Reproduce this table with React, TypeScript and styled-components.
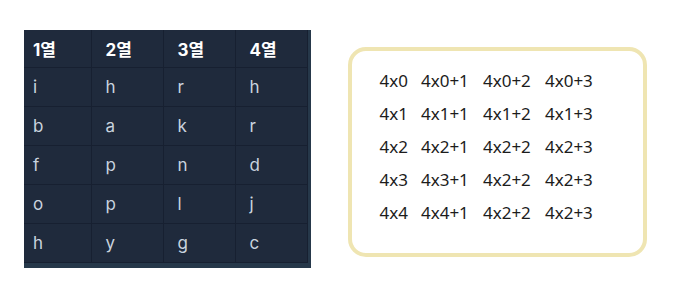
import React from "react"
import styled, { createGlobalStyle } from "styled-components"

const headers = ["1열", "2열", "3열", "4열"]
const rows = [
  ["i", "h", "r", "h"],
  ["b", "a", "k", "r"],
  ["f", "p", "n", "d"],
  ["o", "p", "l", "j"],
  ["h", "y", "g", "c"],
]

const formulas = [
  ["4x0", "4x0+1", "4x0+2", "4x0+3"],
  ["4x1", "4x1+1", "4x1+2", "4x1+3"],
  ["4x2", "4x2+1", "4x2+2", "4x2+3"],
  ["4x3", "4x3+1", "4x2+2", "4x2+3"],
  ["4x4", "4x4+1", "4x2+2", "4x2+3"],
]

const colWidths = [67, 72, 72, 72]

const App: React.FC = () => {
  return (
    <>
      <GlobalStyle />
      <Page>
        <TableWrap>
          <Table>
            <colgroup>
              {colWidths.map((w, i) => (
                <col key={i} style={{ width: w }} />
              ))}
            </colgroup>
            <thead>
              <tr>
                {headers.map((h, i) => (
                  <Th key={h} $first={i === 0}>
                    {h}
                  </Th>
                ))}
              </tr>
            </thead>
            <tbody>
              {rows.map((row, r) => (
                <tr key={r}>
                  {row.map((cell, i) => (
                    <Td key={i} $first={i === 0}>
                      {cell}
                    </Td>
                  ))}
                </tr>
              ))}
            </tbody>
          </Table>
        </TableWrap>

        <FormulaBox>
          {formulas.map((line, r) => (
            <FormulaRow key={r}>
              {line.map((f, i) => (
                <Formula key={i} $first={i === 0}>
                  {f}
                </Formula>
              ))}
            </FormulaRow>
          ))}
        </FormulaBox>
      </Page>
    </>
  )
}

const GlobalStyle = createGlobalStyle`
  body {
    margin: 0;
    background: #ffffff;
    font-family: Inter, "Noto Sans CJK KR", sans-serif;
  }
`

const Page = styled.div`
  display: flex;
  align-items: flex-start;
  gap: 37px;
  padding: 30px 0 0 24px;
`

const TableWrap = styled.div`
  background: #26384a;
  padding: 0 3px 5px 0;
`

const Table = styled.table`
  border-collapse: collapse;
  table-layout: fixed;
  width: 283px;
  background: #1f2a3c;
  font-family: Inter, "Noto Sans CJK KR", sans-serif;
  font-size: 17px;
`

const Th = styled.th<{ $first?: boolean }>`
  height: 37px;
  padding: 0 0 0 ${(p) => (p.$first ? 9 : 14)}px;
  text-align: left;
  font-weight: 700;
  color: #ffffff;
  border: 1px solid #172031;
  border-top: none;
  border-left: ${(p) => (p.$first ? "none" : "1px solid #172031")};
`

const Td = styled.td<{ $first?: boolean }>`
  height: 38px;
  padding: 0 0 0 ${(p) => (p.$first ? 9 : 14)}px;
  color: #c9d3df;
  border: 1px solid #172031;
  border-left: ${(p) => (p.$first ? "none" : "1px solid #172031")};
`

const FormulaBox = styled.div`
  margin-top: 17px;
  width: 299px;
  height: 210px;
  box-sizing: border-box;
  border: 4px solid #efe5b2;
  border-radius: 18px;
  padding: 20px 0 0 28px;
  display: flex;
  flex-direction: column;
  gap: 13px;
`

const FormulaRow = styled.div`
  display: flex;
  gap: 13px;
`

const Formula = styled.span<{ $first?: boolean }>`
  font-family: "Noto Sans", "Open Sans", sans-serif;
  font-size: 17px;
  line-height: 20px;
  color: #1c1c1c;
  min-width: ${(p) => (p.$first ? 27 : 49)}px;
`

export default App
